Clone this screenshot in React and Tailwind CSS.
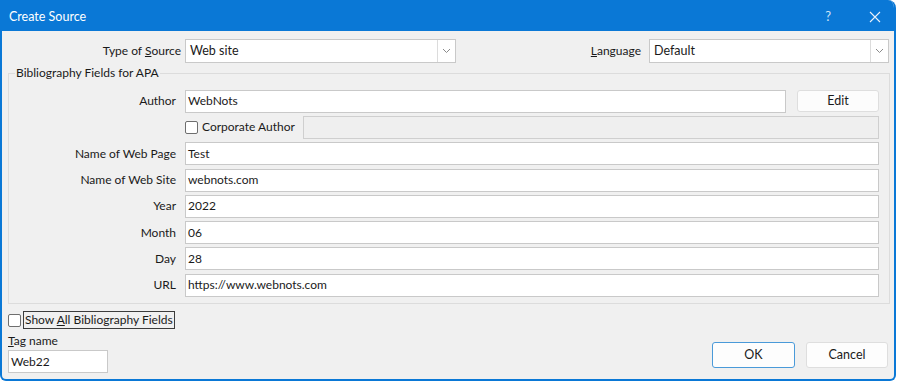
import React from 'react';

const font = { fontFamily: 'Lato, "Segoe UI", sans-serif' };

function Chevron() {
  return (
    <svg width="9" height="6" viewBox="0 0 9 6" fill="none" stroke="#8a8a8a" strokeWidth="1" aria-hidden="true">
      <path d="M1 1l3.5 3.5L8 1" />
    </svg>
  );
}

function Select({ value, className }) {
  return (
    <div className={`flex h-[24px] items-stretch border border-[#c9c9c9] bg-white ${className}`}>
      <div className="flex flex-1 items-center pl-[4px] text-[12.5px] text-[#1a1a1a]">{value}</div>
      <div className="flex w-[18px] items-center justify-center border-l border-[#dcdcdc]">
        <Chevron />
      </div>
    </div>
  );
}

function Field({ value, className = '' }) {
  return (
    <div className={`flex h-[23px] items-center border border-[#c9c9c9] bg-white pl-[2px] text-[12px] text-[#1a1a1a] ${className}`}>
      {value}
    </div>
  );
}

function Checkbox() {
  return <span className="inline-block h-[13px] w-[13px] shrink-0 rounded-[2px] border border-[#6e6e6e] bg-white" />;
}

function Row({ label, children }) {
  return (
    <div className="flex h-[26.3px] items-center">
      <div className="w-[167px] shrink-0 whitespace-nowrap text-right text-[12px] text-[#1a1a1a]">{label}</div>
      <div className="ml-[9px] flex min-w-0 flex-1 items-center">{children}</div>
    </div>
  );
}

const rows = [
  ['Name of Web Page', 'Test'],
  ['Name of Web Site', 'webnots.com'],
  ['Year', '2022'],
  ['Month', '06'],
  ['Day', '28'],
  ['URL', 'https://www.webnots.com'],
];

export default function App() {
  return (
    <div className="h-[384px] w-[897px] bg-white" style={font}>
      <div className="flex h-[381px] w-[896px] flex-col overflow-hidden rounded-tr-[8px] rounded-b-[6px] border-x-[2px] border-b-[2px] border-[#0a78d6] bg-[#f0f0f0]">
        <div className="flex h-[31px] shrink-0 items-center bg-[#0a78d6] pl-[7px] pt-[3px] text-white">
          <span className="text-[12.5px]">Create Source</span>
          <span className="ml-auto mr-[38px] text-[13px] text-[#cfe4f7]">?</span>
          <svg width="12" height="12" viewBox="0 0 12 12" stroke="#e8f1fa" strokeWidth="1.1" className="mr-[13px]" aria-hidden="true">
            <path d="M1 1l10 10M11 1L1 11" />
          </svg>
        </div>

        <div className="flex h-[32px] items-center pt-[8px]">
          <div className="w-[179px] text-right text-[12px] text-[#1a1a1a]">
            Type of <span className="underline">S</span>ource
          </div>
          <Select value="Web site" className="ml-[4px] w-[271px]" />
          <div className="ml-auto text-[12px] text-[#1a1a1a]">
            <span className="underline">L</span>anguage
          </div>
          <Select value="Default" className="ml-[8px] mr-[5px] w-[240px]" />
        </div>

        <div className="relative ml-[6px] mr-[4px] mt-[10px] h-[231px] border border-[#dcdcdc]">
          <div className="absolute left-[6px] top-[-10px] bg-[#f0f0f0] px-[1px] text-[12px] text-[#1a1a1a]">
            Bibliography Fields for APA
          </div>
          <div className="pr-[10px] pt-[14px]">
            <Row label="Author">
              <Field value="WebNots" className="w-[601px] shrink-0" />
              <button className="ml-[11px] flex h-[22px] w-[82px] shrink-0 items-center justify-center rounded-[3px] border border-[#dedede] bg-[#fcfcfc] text-[12.5px] text-[#1a1a1a]">
                Edit
              </button>
            </Row>
            <Row label="">
              <div className="flex w-[118px] shrink-0 items-center whitespace-nowrap">
                <Checkbox />
                <span className="ml-[4px] text-[12px] text-[#1a1a1a]">Corporate Author</span>
              </div>
              <div className="h-[23px] flex-1 border border-[#cfcfcf] bg-[#efefef]" />
            </Row>
            {rows.map(([label, value]) => (
              <Row key={label} label={label}>
                <Field value={value} className="flex-1" />
              </Row>
            ))}
          </div>
        </div>

        <div className="ml-[6px] mt-[7px] flex items-center">
          <Checkbox />
          <span className="ml-[2px] border border-[#3c3c3c] px-[1px] text-[12px] leading-[16px] text-[#1a1a1a]">
            Show <span className="underline">A</span>ll Bibliography Fields
          </span>
        </div>

        <div className="mx-[6px] mt-[3px] flex items-end">
          <div>
            <div className="text-[12px] leading-[18px] text-[#1a1a1a]">
              <span className="underline">T</span>ag name
            </div>
            <Field value="Web22" className="w-[100px]" />
          </div>
          <button className="mb-[5px] ml-auto flex h-[26px] w-[83px] items-center justify-center rounded-[3px] border border-[#4a9ad9] bg-[#fdfdfd] text-[12.5px] text-[#1a1a1a]">
            OK
          </button>
          <button className="mb-[5px] ml-[11px] mr-[0px] flex h-[26px] w-[82px] items-center justify-center rounded-[3px] border border-[#dedede] bg-[#fdfdfd] text-[12.5px] text-[#1a1a1a]">
            Cancel
          </button>
        </div>
      </div>
    </div>
  );
}
